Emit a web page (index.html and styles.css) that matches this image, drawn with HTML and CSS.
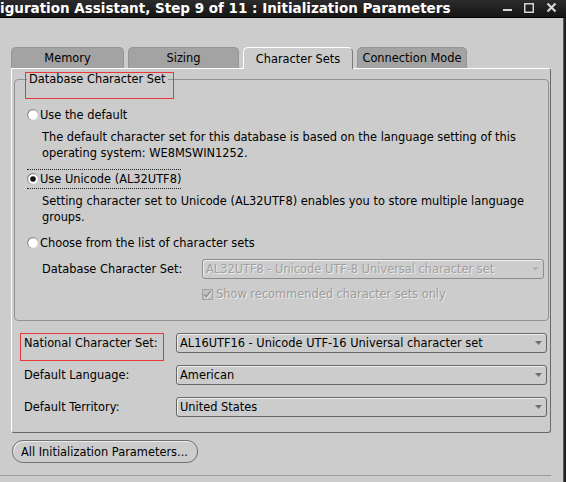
FILE: index.html
```html
<!DOCTYPE html>
<html>
<head>
<meta charset="utf-8">
<title>Initialization Parameters</title>
<link rel="stylesheet" href="styles.css">
</head>
<body>
<div class="window">
  <div class="titlebar">
    <span class="title">iguration Assistant, Step 9 of 11 : Initialization Parameters</span>
    <svg class="controls" width="63" height="17" viewBox="0 0 63 17">
      <rect x="0" y="9" width="9" height="2" fill="#d6d6d6"/>
      <rect x="21.75" y="3.75" width="8.5" height="8.5" fill="none" stroke="#d6d6d6" stroke-width="1.5"/>
      <path d="M44.5 3.5 L52.5 11.5 M52.5 3.5 L44.5 11.5" stroke="#d6d6d6" stroke-width="2.2" fill="none"/>
    </svg>
  </div>
  <div class="main">
    <div class="client">
      <div class="tabs">
        <div class="tab t1">Memory</div>
        <div class="tab t2">Sizing</div>
        <div class="tab t3 active">Character Sets</div>
        <div class="tab t4">Connection Mode</div>
      </div>
      <div class="panel">
        <fieldset class="group">
          <legend class="legend annot-legend">Database Character Set</legend>
          <div class="opt">
            <svg class="radio" width="12" height="12" viewBox="0 0 12 12"><defs><linearGradient id="rg" x1="0" y1="0" x2="1" y2="1"><stop offset="0" stop-color="#6e6e6e"/><stop offset="1" stop-color="#e6e6e6"/></linearGradient></defs><circle cx="6" cy="6" r="5.4" fill="#fff" stroke="url(#rg)" stroke-width="1.2"/></svg>
            <span>Use the default</span>
          </div>
          <p class="desc">The default character set for this database is based on the language setting of this<br>operating system: WE8MSWIN1252.</p>
          <div class="opt">
            <span class="focus">
              <svg class="radio" width="12" height="12" viewBox="0 0 12 12"><circle cx="6" cy="6" r="5.4" fill="#fff" stroke="url(#rg)" stroke-width="1.2"/><circle cx="6" cy="6" r="2.8" fill="#111"/></svg>
              <span>Use Unicode (AL32UTF8)</span>
            </span>
          </div>
          <p class="desc">Setting character set to Unicode (AL32UTF8) enables you to store multiple language<br>groups.</p>
          <div class="opt">
            <svg class="radio" width="12" height="12" viewBox="0 0 12 12"><circle cx="6" cy="6" r="5.4" fill="#fff" stroke="url(#rg)" stroke-width="1.2"/></svg>
            <span>Choose from the list of character sets</span>
          </div>
          <div class="selrow">
            <span class="sel-label">Database Character Set:</span>
            <div class="combo disabled">
              <span class="combo-text">AL32UTF8 - Unicode UTF-8 Universal character set</span>
              <svg class="arrow" width="7" height="4" viewBox="0 0 7 4"><path d="M0 0 H7 L3.5 4 Z" fill="#b4b4b4"/></svg>
            </div>
          </div>
          <div class="checkrow">
            <svg class="check" width="11" height="11" viewBox="0 0 11 11"><rect x="0.5" y="0.5" width="10" height="10" fill="#c2c2c2" stroke="#a2a2a2"/><path d="M2.5 6.5 L4.8 8.8 L9.2 3.2" stroke="#f0f0f0" stroke-width="1.6" fill="none"/><path d="M2 5.5 L4.3 7.8 L8.7 2.2" stroke="#929292" stroke-width="1.6" fill="none"/></svg>
            <span>Show recommended character sets only</span>
          </div>
        </fieldset>
        <div class="params">
          <span class="plabel annot-label">National Character Set:</span>
          <div class="combo">
            <span class="combo-text">AL16UTF16 - Unicode UTF-16 Universal character set</span>
            <svg class="arrow" width="7" height="4" viewBox="0 0 7 4"><path d="M0 0 H7 L3.5 4 Z" fill="#707070"/></svg>
          </div>
          <span class="plabel">Default Language:</span>
          <div class="combo">
            <span class="combo-text">American</span>
            <svg class="arrow" width="7" height="4" viewBox="0 0 7 4"><path d="M0 0 H7 L3.5 4 Z" fill="#707070"/></svg>
          </div>
          <span class="plabel">Default Territory:</span>
          <div class="combo">
            <span class="combo-text">United States</span>
            <svg class="arrow" width="7" height="4" viewBox="0 0 7 4"><path d="M0 0 H7 L3.5 4 Z" fill="#707070"/></svg>
          </div>
        </div>
      </div>
      <button class="btn" type="button">All Initialization Parameters...</button>
      <div class="sep"></div>
    </div>
    <div class="edge"></div>
  </div>
</div>
</body>
</html>
```

FILE: styles.css
```css
* { box-sizing: border-box; }
html, body { margin: 0; padding: 0; }
body {
  width: 566px;
  height: 482px;
  overflow: hidden;
  background: #cccccc;
  font-family: "DejaVu Sans", sans-serif;
  font-size: 11.4px;
  color: #000;
}
.window { display: flex; flex-direction: column; height: 482px; }

/* title bar */
.titlebar {
  flex: none;
  height: 18px;
  display: flex;
  align-items: center;
  background: linear-gradient(#2c2c2c, #151515);
  border-bottom: 1px solid #050505;
  color: #fff;
}
.title {
  flex: 1;
  font-weight: bold;
  font-size: 13.5px;
  line-height: 17px;
  white-space: nowrap;
  overflow: hidden;
}
.controls { flex: none; display: block; }

.main { flex: 1; display: flex; }
.client { flex: 1; padding-top: 29px; }
.edge { flex: none; width: 3px; background: #232323; border-left: 1px solid #5a5a5a; }

/* tabs */
.tabs {
  display: flex;
  gap: 4px;
  margin-left: 11px;
  height: 21px;
  position: relative;
  z-index: 1;
}
.tab {
  height: 21px;
  background: #a3a3a3;
  border: 1px solid #959595;
  border-bottom: none;
  border-radius: 5px 5px 0 0;
  display: flex;
  align-items: center;
  justify-content: center;
}
.t1 { width: 113px; }
.t2 { width: 111px; }
.t3 { width: 110px; }
.t4 { width: 110px; }
.tab.active {
  height: 22px;
  background: #cccccc;
  border-color: #ffffff #7a7a7a #cccccc #ffffff;
}

/* panel */
.panel {
  margin-left: 11px;
  width: 540px;
  border: 1px solid;
  border-color: #ffffff #6a6a6a #6a6a6a #ffffff;
  border-radius: 0 3px 3px 3px;
}
.group {
  margin: 3px 1px 0 2px;
  padding: 19px 4px 18px 12px;
  border: 1px solid #939393;
  border-radius: 4px;
  min-width: 0;
}
.legend {
  padding: 0 2px;
  line-height: 14px;
  position: relative;
}
.annot-legend::after {
  content: "";
  position: absolute;
  left: -2px;
  top: 0;
  width: 147px;
  height: 25px;
  border: 1px solid #e8383b;
}

.opt { height: 20px; display: flex; align-items: center; }
.radio { flex: none; display: block; margin-right: 1px; }
.focus {
  display: flex;
  align-items: center;
  height: 20px;
  border-top: 1px dotted #222;
  border-bottom: 1px dotted #222;
}
.desc { margin: 4px 0 0 15px; line-height: 16px; }
.desc + .opt { margin-top: 8px; }

.selrow {
  margin-top: 6px;
  padding-left: 15px;
  display: flex;
  align-items: center;
}
.sel-label { width: 160px; flex: none; }
.selrow .combo { flex: 1; }

.checkrow {
  margin-top: 7px;
  padding-left: 175px;
  height: 16px;
  display: flex;
  align-items: center;
  gap: 3px;
  color: #9c9c9c;
  text-shadow: 1px 1px 0 #ececec;
}
.check { flex: none; display: block; }

/* combos */
.combo {
  height: 20px;
  border: 1px solid #666;
  border-radius: 3px;
  box-shadow: inset 1px 1px 0 #f0f0f0;
  padding: 0 4px 0 3px;
  display: flex;
  align-items: center;
  justify-content: space-between;
  white-space: nowrap;
}
.combo .arrow { flex: none; display: block; }
.combo.disabled {
  border-color: #8c8c8c;
  color: #a0a0a0;
  text-shadow: 1px 1px 0 #ececec;
}

.params {
  display: grid;
  grid-template-columns: 152px 1fr;
  row-gap: 12px;
  padding: 12px 3px 15px 12px;
}
.plabel {
  height: 20px;
  display: flex;
  align-items: center;
  position: relative;
}
.annot-label::after {
  content: "";
  position: absolute;
  left: -4px;
  top: 0;
  width: 142px;
  height: 26px;
  border: 1px solid #e8383b;
}

/* footer */
.btn {
  display: block;
  margin: 7px 0 0 12px;
  width: 186px;
  height: 23px;
  padding: 0 0 0 8px;
  border: 1px solid #707070;
  border-radius: 11px;
  background: #cccccc;
  box-shadow: inset 1px 1px 0 #ededed;
  font: inherit;
  color: #000;
  text-align: left;
}
.sep { margin-top: 12px; width: 551px; height: 1px; background: #9a9a9a; }
```
